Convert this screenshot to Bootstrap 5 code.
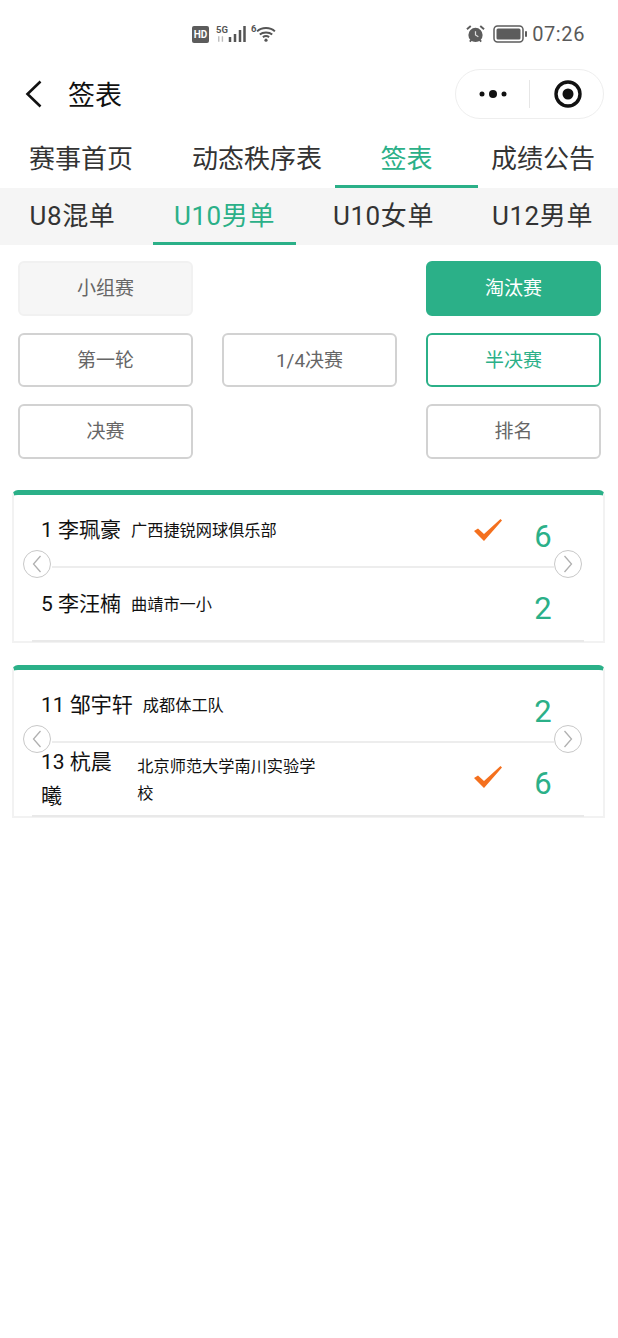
<!DOCTYPE html>
<html lang="zh-CN">
<head>
	<meta charset="utf-8">
	<meta name="viewport" content="width=device-width, initial-scale=1">
	<title>签表</title>

	<link href="https://cdn.jsdelivr.net/npm/bootstrap@5.3.3/dist/css/bootstrap.min.css" rel="stylesheet">
	<script src="https://cdn.jsdelivr.net/npm/bootstrap@5.3.3/dist/js/bootstrap.bundle.min.js"></script>

	<style>
		body {
			font-family: Roboto, "Noto Sans CJK SC", sans-serif;
			background: #fff;
			color: #111;
		}

		.status-bar { height: 68px; padding-left: 192px; padding-right: 33px; color: #555; }
		.hd-tag {
			width: 17px; height: 17px; margin-right: 7px; background: #5c5c5c; color: #fff; border-radius: 2px;
			font-size: 10px; font-weight: 700; line-height: 17px; text-align: center;
		}
		.tiny-label { font-size: 9.500px; font-weight: 700; line-height: 10px; color: #555; }
		.clock { font-size: 20px; line-height: 24px; letter-spacing: .6px; color: #5a5a5a; }

		.top-bar { height: 52px; padding-left: 25px; padding-right: 14px; }
		.page-title { font-size: 27px; line-height: 36px; margin-left: 26px; padding-top: 3px; color: #111; }
		.capsule {
			width: 149px; height: 50px; border: 1px solid #eee; border-radius: 25px;
		}
		.capsule-part { width: 73px; }
		.capsule-target { padding-left: 3px; }
		.capsule-line { width: 1px; height: 28px; background: #e6e6e6; }

		.tab-row { height: 56px; margin-top: 12px; font-size: 26px; color: #333; }
		.tab-item { padding-top: 9px; line-height: 36px; text-align: center; white-space: nowrap; height: 56px; }
		.tab-on { color: #2bb088; border-bottom: 3px solid #2bb088; }

		.subtab-row { height: 57px; background: #f5f5f5; font-size: 26px; letter-spacing: .6px; color: #333; }
		.subtab-item { width: 143px; height: 57px; padding-left: 2px; line-height: 56px; text-align: center; white-space: nowrap; }
		.subtab-item.tab-on { padding-left: 0; }

		.stage-grid {
			display: grid;
			grid-template-columns: 175px 175px 175px;
			grid-template-rows: 55px 54px 55px;
			column-gap: 29px;
			row-gap: 17px;
			padding: 16px 0 0 18px;
		}
		.stage-btn {
			line-height: 51px; font-size: 19px; color: #666; text-align: center;
			background: #fff; border: 2px solid #d2d2d2; border-radius: 6px;
		}
		.stage-muted { background: #f6f6f6; border-color: #f1f1f1; }
		.stage-fill { background: #2bb088; border-color: #2bb088; color: #fff; }
		.stage-line { border-color: #2bb088; color: #2bb088; }

		.match-list { padding: 31px 13px 0 12px; }
		.match-box {
			position: relative; height: 153px; margin-bottom: 22px;
			border: 2px solid #f2f2f2; border-top: 5px solid #2bb088; border-radius: 6px 6px 0 0;
		}
		.player-row { position: relative; height: 72px; padding-left: 27px; }
		.player-first { padding-bottom: 2px; }
		.player-last { padding-top: 1px; }
		.player-first::after {
			content: ""; position: absolute; left: 38px; right: 49px; bottom: -1px; height: 2px; background: #ededed;
		}
		.player-last::after {
			content: ""; position: absolute; left: 18px; right: 19px; bottom: -3px; height: 2px; background: #e9e9e9;
		}
		.player-info { width: 279px; column-gap: 10px; }
		.player-name { font-size: 21px; line-height: 34px; color: #111; }
		.player-club { font-size: 16.2px; line-height: 27px; color: #111; }
		.player-last .player-club { padding-top: 2px; }
		.win-mark { position: absolute; left: 460px; }
		.player-last .win-mark { margin-top: -4px; }
		.set-score {
			position: absolute; left: 500px; width: 58px; text-align: center;
			font-size: 31px; line-height: 40px; color: #2bb088; padding-top: 11px;
		}
		.player-first .set-score { padding-top: 13px; }
		.round-arrow {
			position: absolute; top: 55px; width: 28px; height: 28px;
			background: #fff; border: 1.5px solid #c8c8c8; border-radius: 50%;
		}
		.arrow-left { left: 9px; }
		.arrow-right { left: 540px; }
	</style>
</head>
<body>

	<div class="status-bar d-flex align-items-center">
		<div class="hd-tag">HD</div>
		<div class="d-flex flex-column">
			<span class="tiny-label">5G</span>
			<svg width="11" height="8" viewBox="0 0 12 8"><path d="M3 1v6M7 7V1" stroke="#bbb" stroke-width="1.5"/></svg>
		</div>
		<svg width="19" height="18" viewBox="0 0 19 18"><path d="M2 12v5M7 9v8M12 5v12M16.500 1v16" stroke="#555" stroke-width="2.500"/></svg>
		<span class="tiny-label align-self-start" style="margin-top:24px;margin-left:4px">6</span>
		<svg width="20" height="16" viewBox="0 0 22 18" fill="none" stroke="#555" stroke-width="2.200"><path d="M1 6c5-5 15-5 20 0M4 9.500c3.500-3 10.500-3 14 0M7.500 12.500c2-1.500 5-1.500 7 0"/><circle cx="11" cy="16" r="1.800" fill="#555" stroke="none"/></svg>
		<div class="ms-auto d-flex align-items-center">
			<svg width="19" height="20" viewBox="0 0 20 20"><circle cx="10" cy="11" r="7.500" fill="#5c5c5c"/><path d="M1 5l4-3.500M19 5l-4-3.500M4 18l2-2M16 18l-2-2" stroke="#5c5c5c" stroke-width="2"/><path d="M10 7v4l3 2" stroke="#ddd" stroke-width="1.300" fill="none"/></svg>
			<svg class="ms-2" width="35" height="18" viewBox="0 0 35 18"><rect x="1" y="1" width="29" height="16" rx="3.500" fill="none" stroke="#5c5c5c" stroke-width="1.500"/><rect x="3.500" y="3.500" width="24" height="11" rx="1.500" fill="#5c5c5c"/><rect x="32" y="6" width="2" height="6" rx="1" fill="#5c5c5c"/></svg>
			<span class="clock ms-1">07:26</span>
		</div>
	</div>

	<div class="top-bar d-flex align-items-center">
		<svg width="17" height="28" viewBox="0 0 17 28" fill="none"><path d="M15.500 1.500 2.500 14l13 12.500" stroke="#111" stroke-width="2.600"/></svg>
		<div class="page-title">签表</div>
		<div class="capsule d-flex align-items-center ms-auto">
			<div class="capsule-part d-flex justify-content-center align-items-center">
				<svg width="30" height="10" viewBox="0 0 30 10"><circle cx="4" cy="5" r="2.500" fill="#111"/><circle cx="15" cy="5" r="4" fill="#111"/><circle cx="26" cy="5" r="2.500" fill="#111"/></svg>
			</div>
			<div class="capsule-line"></div>
			<div class="capsule-part capsule-target d-flex justify-content-center align-items-center">
				<svg width="28" height="28" viewBox="0 0 28 28"><circle cx="14" cy="14" r="12" fill="none" stroke="#111" stroke-width="3.400"/><circle cx="14" cy="14" r="5.500" fill="#111"/></svg>
			</div>
		</div>
	</div>

	<div class="tab-row d-flex">
		<div class="tab-item" style="width:162px">赛事首页</div>
		<div class="tab-item" style="width:156px;margin-left:17px">动态秩序表</div>
		<div class="tab-item tab-on" style="width:143px">签表</div>
		<div class="tab-item" style="width:130px">成绩公告</div>
	</div>

	<div class="subtab-row d-flex">
		<div class="subtab-item" style="margin-right:10px">U8混单</div>
		<div class="subtab-item tab-on" style="margin-right:15px">U10男单</div>
		<div class="subtab-item me-3">U10女单</div>
		<div class="subtab-item">U12男单</div>
	</div>

	<div class="stage-grid">
		<div class="stage-btn stage-muted">小组赛</div>
		<div></div>
		<div class="stage-btn stage-fill">淘汰赛</div>
		<div class="stage-btn">第一轮</div>
		<div class="stage-btn">1/4决赛</div>
		<div class="stage-btn stage-line">半决赛</div>
		<div class="stage-btn">决赛</div>
		<div></div>
		<div class="stage-btn">排名</div>
	</div>

	<div class="match-list">
		<div class="match-box">
			<div class="player-row player-first d-flex align-items-center">
				<div class="player-info d-flex align-items-center">
					<div class="player-name">1 李珮豪</div>
					<div class="player-club">广西捷锐网球俱乐部</div>
				</div>
				<svg class="win-mark" width="28" height="24" viewBox="0 0 28 24"><path d="M0 13l4-2.500 6 5.500L26.500 1l1.500 1.500L10 23z" fill="#f4701e"/></svg>
				<div class="set-score">6</div>
			</div>
			<div class="player-row player-last d-flex align-items-center">
				<div class="player-info d-flex align-items-center">
					<div class="player-name">5 李汪楠</div>
					<div class="player-club">曲靖市一小</div>
				</div>
				<div class="set-score">2</div>
			</div>
			<div class="round-arrow arrow-left d-flex align-items-center justify-content-center">
				<svg width="10" height="18" viewBox="0 0 10 18" fill="none"><path d="M8.500 1 1.500 9l7 8" stroke="#b0b0b0" stroke-width="1.300"/></svg>
			</div>
			<div class="round-arrow arrow-right d-flex align-items-center justify-content-center">
				<svg width="10" height="18" viewBox="0 0 10 18" fill="none"><path d="M1.500 1l7 8-7 8" stroke="#b0b0b0" stroke-width="1.300"/></svg>
			</div>
		</div>

		<div class="match-box">
			<div class="player-row player-first d-flex align-items-center">
				<div class="player-info d-flex align-items-center">
					<div class="player-name">11 邹宇轩</div>
					<div class="player-club">成都体工队</div>
				</div>
				<div class="set-score">2</div>
			</div>
			<div class="player-row player-last d-flex align-items-center">
				<div class="player-info d-flex align-items-center">
					<div class="player-name">13 杭晨曦</div>
					<div class="player-club">北京师范大学南川实验学校</div>
				</div>
				<svg class="win-mark" width="28" height="24" viewBox="0 0 28 24"><path d="M0 13l4-2.500 6 5.500L26.500 1l1.500 1.500L10 23z" fill="#f4701e"/></svg>
				<div class="set-score">6</div>
			</div>
			<div class="round-arrow arrow-left d-flex align-items-center justify-content-center">
				<svg width="10" height="18" viewBox="0 0 10 18" fill="none"><path d="M8.500 1 1.500 9l7 8" stroke="#b0b0b0" stroke-width="1.300"/></svg>
			</div>
			<div class="round-arrow arrow-right d-flex align-items-center justify-content-center">
				<svg width="10" height="18" viewBox="0 0 10 18" fill="none"><path d="M1.500 1l7 8-7 8" stroke="#b0b0b0" stroke-width="1.300"/></svg>
			</div>
		</div>
	</div>

</body>
</html>
